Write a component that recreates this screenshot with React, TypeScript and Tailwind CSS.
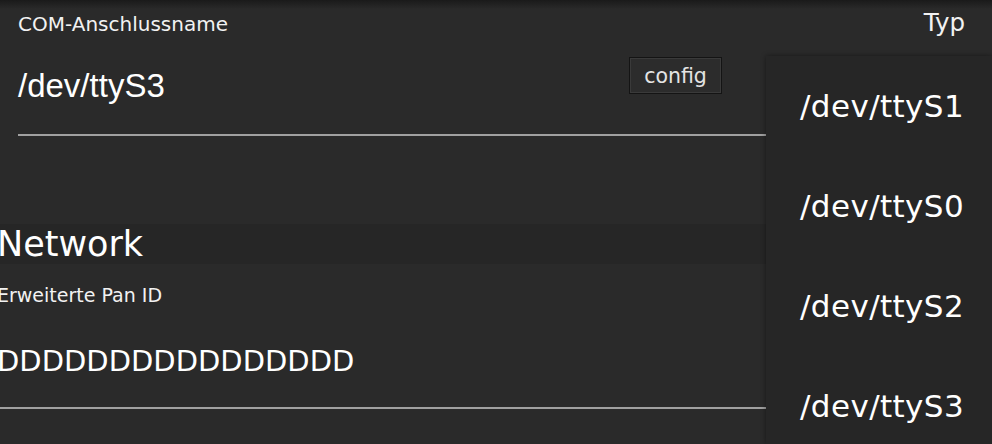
import React from "react";

const items = ["/dev/ttyS1", "/dev/ttyS0", "/dev/ttyS2", "/dev/ttyS3"];

export default function App() {
  return (
    <div className="relative w-[992px] h-[444px] overflow-hidden bg-[#2a2a2a] text-[#f2f2f2] font-['DejaVu_Sans',sans-serif]">
      <div className="absolute left-0 right-0 top-0 h-[9px] bg-gradient-to-b from-[#1a1a1a] to-[#2a2a2a]" />
      <div className="flex flex-col">
        <div className="px-[18px] pt-[11px]">
          <div className="flex items-baseline justify-between">
            <span className="text-[20px] leading-[24px]">COM-Anschlussname</span>
            <span className="mr-[9px] text-[24.5px] leading-[24px]">Typ</span>
          </div>
          <div className="mt-[21px] flex items-start">
            <span className="mt-[9px] flex-1 font-['Liberation_Sans',sans-serif] text-[33px] leading-[40px] text-white">
              /dev/ttyS3
            </span>
            <button className="mr-[252px] flex h-[37px] w-[93px] items-center justify-center border border-[#141414] bg-[#2c2c2c] text-[20.5px] leading-[24px] text-[#e4e4e4] shadow-[inset_0_0_0_1px_#3a3a3a]">
              config
            </button>
          </div>
          <div className="mt-[28px] h-[2px] bg-[#a0a0a0]" />
        </div>
        <div className="mt-[88px] flex h-[40px] items-center bg-[#262626]">
          <span className="-ml-[3px] text-[35px] leading-[40px] text-white">Network</span>
        </div>
        <div className="flex flex-col pr-[18px]">
          <span className="-ml-[3px] mt-[19px] text-[19px] leading-[24px]">Erweiterte Pan ID</span>
          <span className="-ml-[3px] mt-[36px] text-[29px] leading-[36px] text-white">DDDDDDDDDDDDDDDD</span>
          <div className="mt-[28px] h-[2px] bg-[#a0a0a0]" />
        </div>
      </div>
      <div className="absolute left-[766px] right-0 top-[56px] bottom-0 flex flex-col bg-[#262626] shadow-[0_0_5px_rgba(0,0,0,0.45)]">
        {items.map((t) => (
          <div key={t} className="h-[100px] pl-[34px] text-[31px] leading-[100px] tracking-[0.4px] text-white">
            {t}
          </div>
        ))}
      </div>
    </div>
  );
}
